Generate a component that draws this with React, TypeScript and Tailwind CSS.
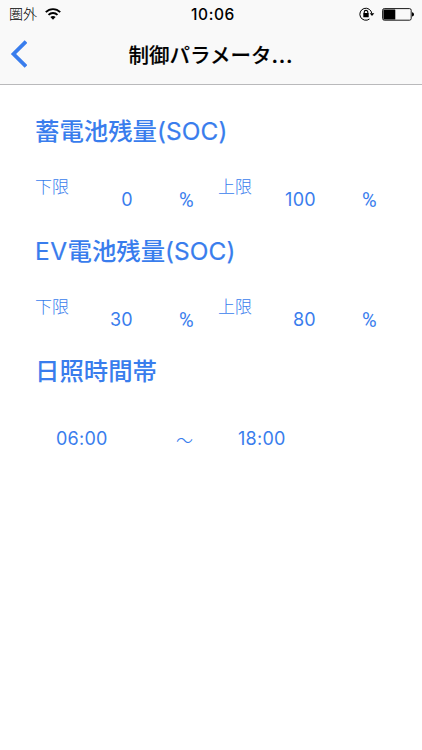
import React from 'react';

interface RangeProps {
  title: React.ReactNode;
  lower: string;
  upper: string;
}

const StatusBar: React.FC = () => (
  <div className="flex h-7 items-center text-black">
    <div className="flex flex-1 items-center pl-[9px]">
      <span className="text-[14px] leading-7 font-light whitespace-nowrap">圏外</span>
      <svg className="ml-[8px] h-3 w-4" viewBox="0 0 16 12" fill="none" stroke="currentColor" strokeWidth="1.9">
        <path d="M0.8 4.2C4.8 0.1 11.2 0.1 15.2 4.2" />
        <path d="M3.5 6.9C6 4.4 10 4.4 12.5 6.9" />
        <path d="M8 11.7L5.4 9.1C6.9 7.7 9.1 7.7 10.6 9.1Z" fill="currentColor" stroke="none" />
      </svg>
    </div>
    <span className="pt-px pl-[2px] text-[15.5px] leading-7 font-medium tracking-[0.6px]">10:06</span>
    <div className="flex flex-1 items-center justify-end pr-[7px]">
      {/* Rotation lock */}
      <svg className="h-[14px] w-[16px]" viewBox="0 0 16 14" fill="none" stroke="currentColor">
        <path d="M10.5 12A6 6 0 1 1 12.8 6.5" strokeWidth="1" />
        <path d="M10.7 6.2H15.3L13 8.9Z" fill="currentColor" stroke="none" />
        <path d="M5.2 6.5V5.2A1.8 1.8 0 0 1 8.8 5.2V6.5" strokeWidth="1.1" />
        <rect x="4.3" y="6.1" width="5.4" height="4.2" rx="0.4" fill="currentColor" stroke="none" />
      </svg>
      {/* Battery */}
      <svg className="ml-[7px] h-[13px] w-[33px]" viewBox="0 0 33 13">
        <rect x="0.6" y="0.6" width="28.6" height="11.6" rx="1.7" fill="none" stroke="currentColor" strokeWidth="0.9" />
        <rect x="1.4" y="1.4" width="11.9" height="10" rx="0.5" fill="currentColor" />
        <path d="M30 4.2C32.7 4.7 32.7 8.1 30 8.6Z" fill="currentColor" />
      </svg>
    </div>
  </div>
);

const NavBar: React.FC = () => (
  <div className="grid h-[56px] grid-cols-[60px_1fr_60px] items-start">
    <button className="flex h-[52px] items-center pl-[9px] text-[#397ded]">
      <svg className="h-7 w-[18px]" viewBox="0 0 18 28" fill="none" stroke="currentColor" strokeWidth="3.8">
        <path d="M17 1.5L4.5 14L17 26.5" />
      </svg>
    </button>
    <h1 className="text-center text-[20.5px] leading-[56px] font-medium whitespace-nowrap text-black [-webkit-text-stroke:0.15px]">
      制御パラメータ<span className="font-semibold tracking-[0.8px]">...</span>
    </h1>
  </div>
);

const Heading: React.FC<{ children: React.ReactNode }> = ({ children }) => (
  <h2 className="h-9 text-[24.4px] leading-9 font-medium whitespace-nowrap">{children}</h2>
);

const Limit: React.FC<{ label: string; value: string }> = ({ label, value }) => (
  <div className="flex w-[183px] items-start">
    <span className="w-[40px] text-[17px] leading-6 font-light">{label}</span>
    <span className="mt-[13px] w-[58px] text-right text-[18px] leading-6 tracking-[0.3px]">{value}</span>
    <span className="mt-[13px] ml-[46px] font-['Roboto'] text-[20px] leading-6">%</span>
  </div>
);

const RangeSection: React.FC<RangeProps> = ({ title, lower, upper }) => (
  <section className="h-[120px]">
    <Heading>{title}</Heading>
    <div className="mt-[26px] flex">
      <Limit label="下限" value={lower} />
      <Limit label="上限" value={upper} />
    </div>
  </section>
);

export default function App() {
  return (
    <div className="h-[750px] w-[422px] overflow-hidden bg-white font-['Inter','Noto_Sans_CJK_JP',sans-serif] text-[#397ded]">
      <header className="h-[85px] border-b border-[#b9b9bb] bg-[#f9f9f9]">
        <StatusBar />
        <NavBar />
      </header>
      <main className="pt-[28px] pl-[35px]">
        <RangeSection
          title={<>蓄電池残量<span className="font-normal tracking-[0.1px] [-webkit-text-stroke:0.2px]">(SOC)</span></>}
          lower="0"
          upper="100"
        />
        <RangeSection
          title={
            <>
              <span className="font-normal tracking-[0.5px] [-webkit-text-stroke:0.2px]">EV</span>電池残量
              <span className="font-normal tracking-[0.1px] [-webkit-text-stroke:0.2px]">(SOC)</span>
            </>
          }
          lower="30"
          upper="80"
        />
        <section>
          <Heading>日照時間帯</Heading>
          <div className="mt-[38px] flex pl-[21px] text-[18px] leading-6 tracking-[0.25px]">
            <span className="w-[120px]">06:00</span>
            <span className="w-[62px] pt-[2px] text-[17px] font-light">～</span>
            <span>18:00</span>
          </div>
        </section>
      </main>
    </div>
  );
}
